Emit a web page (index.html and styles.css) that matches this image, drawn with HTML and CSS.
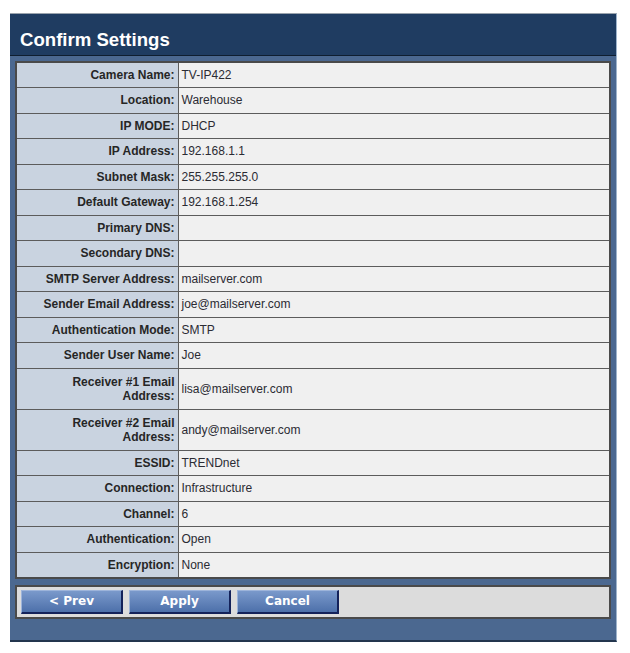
FILE: index.html
```html
<!DOCTYPE html>
<html>
<head>
<meta charset="utf-8">
<link rel="stylesheet" href="styles.css">
</head>
<body>
<div class="panel">
  <div class="header"><h1 class="title">Confirm Settings</h1></div>
  <div class="body">
    <table class="settings">
      <tr><td class="lbl">Camera Name:</td><td class="val">TV-IP422</td></tr>
      <tr><td class="lbl">Location:</td><td class="val">Warehouse</td></tr>
      <tr><td class="lbl">IP MODE:</td><td class="val">DHCP</td></tr>
      <tr><td class="lbl">IP Address:</td><td class="val">192.168.1.1</td></tr>
      <tr><td class="lbl">Subnet Mask:</td><td class="val">255.255.255.0</td></tr>
      <tr><td class="lbl">Default Gateway:</td><td class="val">192.168.1.254</td></tr>
      <tr><td class="lbl">Primary DNS:</td><td class="val"></td></tr>
      <tr><td class="lbl">Secondary DNS:</td><td class="val"></td></tr>
      <tr><td class="lbl">SMTP Server Address:</td><td class="val">mailserver.com</td></tr>
      <tr><td class="lbl">Sender Email Address:</td><td class="val">joe@mailserver.com</td></tr>
      <tr><td class="lbl">Authentication Mode:</td><td class="val">SMTP</td></tr>
      <tr><td class="lbl">Sender User Name:</td><td class="val">Joe</td></tr>
      <tr class="tall"><td class="lbl">Receiver #1 Email Address:</td><td class="val">lisa@mailserver.com</td></tr>
      <tr class="tall"><td class="lbl">Receiver #2 Email Address:</td><td class="val">andy@mailserver.com</td></tr>
      <tr><td class="lbl">ESSID:</td><td class="val">TRENDnet</td></tr>
      <tr><td class="lbl">Connection:</td><td class="val">Infrastructure</td></tr>
      <tr><td class="lbl">Channel:</td><td class="val">6</td></tr>
      <tr><td class="lbl">Authentication:</td><td class="val">Open</td></tr>
      <tr><td class="lbl">Encryption:</td><td class="val">None</td></tr>
    </table>
    <div class="buttons">
      <button class="btn">&lt; Prev</button>
      <button class="btn">Apply</button>
      <button class="btn">Cancel</button>
    </div>
  </div>
</div>
</body>
</html>
```
FILE: styles.css
```css
html, body {
  margin: 0;
  padding: 0;
  background: #ffffff;
}
body {
  font-family: "Liberation Sans", Arial, sans-serif;
}
.panel {
  margin: 13px 0 0 10px;
  width: 607px;
  background: #4b6890;
  border-top: 1px solid #9aa3ad;
  border-right: 1px solid #9fb4cc;
  border-bottom: 2px solid #23354d;
  box-sizing: border-box;
  box-shadow: 0 2px 0 #b9c6d6;
}
.header {
  height: 42px;
  background: #1f3c61;
  border-bottom: 1px solid #0f1e30;
  box-sizing: border-box;
  display: flex;
  align-items: center;
  padding-left: 10px;
  padding-top: 11px;
}
.title {
  margin: 0;
  color: #ffffff;
  font-family: "Liberation Sans", Arial, sans-serif;
  font-weight: bold;
  font-size: 18.6px;
}
.body {
  padding: 5px 5px 21px 5px;
}
.settings {
  width: 596px;
  border-collapse: collapse;
  border: 2px solid #4a4a4a;
  font-size: 12px;
  color: #2a2a2a;
}
.settings td {
  border: 1px solid #5c5c5c;
  height: 25.5px;
  padding: 0 3px;
  box-sizing: border-box;
}
.settings tr.tall td {
  height: 41px;
}
.lbl {
  width: 162px;
  background: #c9d3e0;
  font-weight: bold;
  text-align: right;
  color: #262626;
  line-height: 14px;
  padding-right: 4px;
}
.val {
  background: #f0f0f0;
  padding-left: 3px;
  color: #2b2b33;
}
.buttons {
  margin-top: 6px;
  height: 34px;
  background: #dcdcdc;
  border: 2px solid #4a4a4a;
  box-sizing: border-box;
  display: flex;
  align-items: center;
  gap: 6px;
  padding-left: 4px;
}
.btn {
  width: 102px;
  height: 24px;
  margin: 0;
  padding: 0;
  background: linear-gradient(#7a99cb, #4d70aa);
  border-top: 1px solid #9db4da;
  border-left: 1px solid #9db4da;
  border-right: 2px solid #14225a;
  border-bottom: 2px solid #14225a;
  color: #ffffff;
  font-family: "DejaVu Sans", Verdana, sans-serif;
  font-weight: bold;
  font-size: 12px;
}
```
